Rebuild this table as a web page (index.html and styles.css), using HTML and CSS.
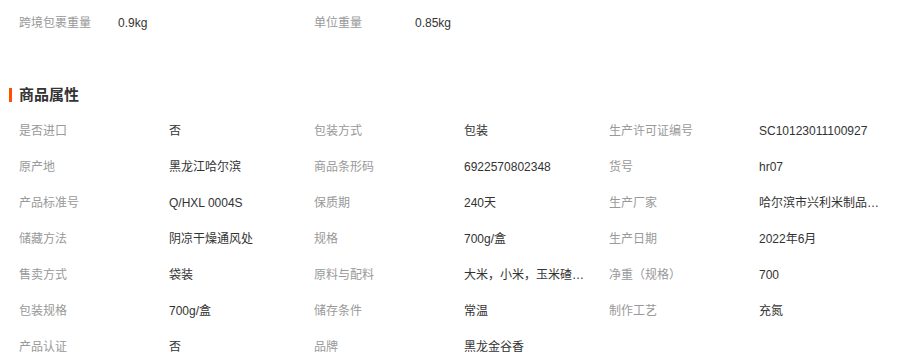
FILE: index.html
```html
<!DOCTYPE html>
<html lang="zh-CN">
<head>
<meta charset="utf-8">
<link rel="stylesheet" href="styles.css">
</head>
<body>
<div class="page">
  <div class="top-row">
    <span class="label">跨境包裹重量</span><span class="value">0.9kg</span>
    <span class="label">单位重量</span><span class="value">0.85kg</span>
  </div>
  <h2 class="section-title">商品属性</h2>
  <div class="attrs">
    <span class="label">是否进口</span><span class="value">否</span>
    <span class="label">包装方式</span><span class="value">包装</span>
    <span class="label">生产许可证编号</span><span class="value">SC10123011100927</span>

    <span class="label">原产地</span><span class="value">黑龙江哈尔滨</span>
    <span class="label">商品条形码</span><span class="value">6922570802348</span>
    <span class="label">货号</span><span class="value">hr07</span>

    <span class="label">产品标准号</span><span class="value">Q/HXL 0004S</span>
    <span class="label">保质期</span><span class="value">240天</span>
    <span class="label">生产厂家</span><span class="value">哈尔滨市兴利米制品有限公司</span>

    <span class="label">储藏方法</span><span class="value">阴凉干燥通风处</span>
    <span class="label">规格</span><span class="value">700g/盒</span>
    <span class="label">生产日期</span><span class="value">2022年6月</span>

    <span class="label">售卖方式</span><span class="value">袋装</span>
    <span class="label">原料与配料</span><span class="value">大米，小米，玉米碴，黄豆</span>
    <span class="label">净重（规格）</span><span class="value">700</span>

    <span class="label">包装规格</span><span class="value">700g/盒</span>
    <span class="label">储存条件</span><span class="value">常温</span>
    <span class="label">制作工艺</span><span class="value">充氮</span>

    <span class="label">产品认证</span><span class="value">否</span>
    <span class="label">品牌</span><span class="value">黑龙金谷香</span>
  </div>
</div>
</body>
</html>
```
FILE: styles.css
```css
html, body {
  margin: 0;
  padding: 0;
  background: #fff;
}
body {
  font-family: "Liberation Sans", "Noto Sans CJK SC", sans-serif;
  font-size: 12px;
  color: #333;
}
.page {
  padding: 5px 0 0 19px;
}
.label {
  color: #999;
}
.value {
  color: #333;
  white-space: nowrap;
  overflow: hidden;
  text-overflow: ellipsis;
  max-width: 124px;
}
.top-row {
  display: grid;
  grid-template-columns: 99px 196px 101px 200px;
  line-height: 36px;
}
.section-title {
  margin: 36px 0 0 -10px;
  padding-left: 10px;
  position: relative;
  font-size: 15px;
  font-weight: bold;
  color: #333;
  line-height: 36px;
  height: 36px;
}
.section-title::before {
  content: "";
  position: absolute;
  left: 0;
  top: 11px;
  width: 3px;
  height: 14px;
  background: #ff5000;
}
.attrs {
  display: grid;
  grid-template-columns: 150px 145px 150px 145px 150px 145px;
  grid-auto-rows: 36px;
  line-height: 36px;
}
```
